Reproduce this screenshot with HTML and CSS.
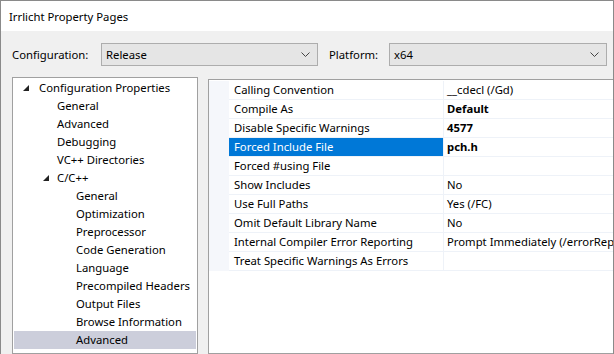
FILE: index.html
```html
<!DOCTYPE html>
<html>
<head>
<meta charset="utf-8">
<title>Irrlicht Property Pages</title>
<link rel="stylesheet" href="styles.css">
</head>
<body>
<div class="window">
  <div class="titlebar">Irrlicht Property Pages</div>
  <div class="toolbar">
    <span class="lbl lbl-config">Configuration:</span>
    <div class="combo combo-config"><span>Release</span><svg class="chev" width="9" height="5" viewBox="0 0 9 5"><polyline points="0.5,0.5 4.5,4.5 8.5,0.5" fill="none" stroke="#444" stroke-width="1"/></svg></div>
    <span class="lbl lbl-platform">Platform:</span>
    <div class="combo combo-platform"><span>x64</span><svg class="chev" width="9" height="5" viewBox="0 0 9 5"><polyline points="0.5,0.5 4.5,4.5 8.5,0.5" fill="none" stroke="#444" stroke-width="1"/></svg></div>
  </div>
  <div class="main">
    <div class="tree">
      <div class="node l0"><svg class="tri" width="7" height="7" viewBox="0 0 7 7"><polygon points="6,0 6,6 0,6" fill="#222"/></svg>Configuration Properties</div>
      <div class="node l1">General</div>
      <div class="node l1">Advanced</div>
      <div class="node l1">Debugging</div>
      <div class="node l1">VC++ Directories</div>
      <div class="node l1e"><svg class="tri" width="7" height="7" viewBox="0 0 7 7"><polygon points="6,0 6,6 0,6" fill="#222"/></svg>C/C++</div>
      <div class="node l2">General</div>
      <div class="node l2">Optimization</div>
      <div class="node l2">Preprocessor</div>
      <div class="node l2">Code Generation</div>
      <div class="node l2">Language</div>
      <div class="node l2">Precompiled Headers</div>
      <div class="node l2">Output Files</div>
      <div class="node l2">Browse Information</div>
      <div class="node l2 sel">Advanced</div>
    </div>
    <div class="props">
      <div class="row"><div class="gut"></div><div class="name">Calling Convention</div><div class="val">__cdecl (/Gd)</div></div>
      <div class="row"><div class="gut"></div><div class="name">Compile As</div><div class="val b">Default</div></div>
      <div class="row"><div class="gut"></div><div class="name">Disable Specific Warnings</div><div class="val b">4577</div></div>
      <div class="row"><div class="gut"></div><div class="name hi">Forced Include File</div><div class="val b">pch.h</div></div>
      <div class="row"><div class="gut"></div><div class="name">Forced #using File</div><div class="val"></div></div>
      <div class="row"><div class="gut"></div><div class="name">Show Includes</div><div class="val">No</div></div>
      <div class="row"><div class="gut"></div><div class="name">Use Full Paths</div><div class="val">Yes (/FC)</div></div>
      <div class="row"><div class="gut"></div><div class="name">Omit Default Library Name</div><div class="val">No</div></div>
      <div class="row"><div class="gut"></div><div class="name">Internal Compiler Error Reporting</div><div class="val">Prompt Immediately (/errorRep</div></div>
      <div class="row"><div class="gut"></div><div class="name">Treat Specific Warnings As Errors</div><div class="val"></div></div>
    </div>
  </div>
</div>
</body>
</html>
```
FILE: styles.css
```css
html, body {
  margin: 0;
  padding: 0;
}
body {
  font-family: "Noto Sans", "Open Sans", sans-serif;
  font-size: 11.3px;
  color: #000;
  background: #fff;
}
.window {
  width: 614px;
  height: 354px;
  box-sizing: border-box;
  border: 1px solid #8a8a8a;
  border-bottom: none;
  background: #f0f0f0;
  overflow: hidden;
  display: flex;
  flex-direction: column;
}
.titlebar {
  height: 30px;
  line-height: 31px;
  background: #fff;
  padding-left: 8px;
  flex: none;
}
.toolbar {
  display: flex;
  align-items: center;
  height: 23px;
  margin-top: 12px;
  padding-left: 11px;
  flex: none;
}
.lbl {
  display: block;
  white-space: nowrap;
}
.lbl-config { width: 89px; }
.lbl-platform { width: 60px; margin-left: 11px; }
.combo {
  box-sizing: border-box;
  height: 23px;
  border: 1px solid #adadad;
  background: #e5e5e5;
  display: flex;
  align-items: center;
  justify-content: space-between;
  padding: 0 7px 0 4px;
}
.combo-config { width: 217px; }
.combo-platform { width: 218px; }
.chev { display: block; }
.main {
  display: flex;
  align-items: flex-start;
  margin-top: 11px;
  padding-left: 11px;
  flex: 1;
  min-height: 0;
}
.tree {
  box-sizing: border-box;
  width: 186px;
  height: 277px;
  border: 1px solid #a0a0a0;
  background: #fff;
  padding: 1px 1px 0 1px;
}
.node {
  height: 18px;
  line-height: 18px;
  white-space: nowrap;
  display: flex;
  align-items: center;
}
.tri { display: block; flex: none; }
.l0 { padding-left: 9px; }
.l0 .tri { margin-right: 9px; }
.l1 { padding-left: 43px; }
.l1e { padding-left: 29px; }
.l1e .tri { margin-right: 7px; }
.l2 { padding-left: 62px; }
.sel { background: #cccedb; }
.props {
  box-sizing: border-box;
  margin-left: 10px;
  margin-top: 2px;
  flex: 1;
  height: 275px;
  border: 1px solid #a0a0a0;
  border-right: none;
  background: #fff;
  padding-top: 1px;
  overflow: hidden;
}
.row {
  display: flex;
  height: 19px;
  box-sizing: border-box;
}
.gut {
  width: 20px;
  flex: none;
  background: #f5f7fb;
}
.name {
  width: 215px;
  flex: none;
  box-sizing: border-box;
  padding-left: 5px;
  line-height: 18px;
  border-bottom: 1px solid #eef2f8;
  border-right: 1px solid #eef2f8;
  white-space: nowrap;
  overflow: hidden;
}
.name.hi {
  background: #0078d7;
  color: #fff;
}
.val {
  flex: 1;
  padding-left: 3px;
  line-height: 18px;
  border-bottom: 1px solid #eef2f8;
  white-space: nowrap;
  overflow: hidden;
}
.b { font-weight: bold; }
```
